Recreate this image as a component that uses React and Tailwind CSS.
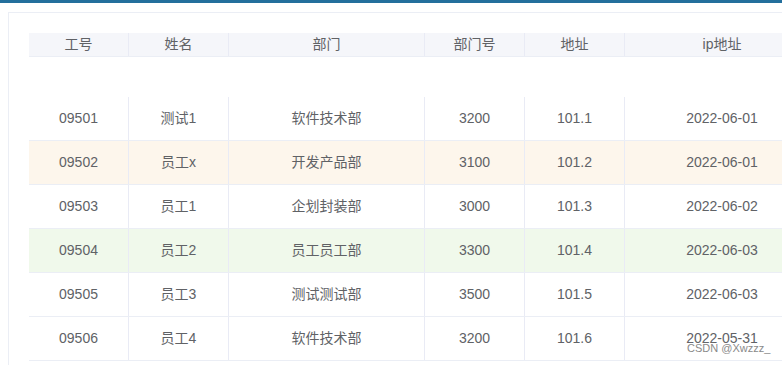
import React from 'react';

const rows = [
  { id: '09501', name: '测试1', dept: '软件技术部', no: '3200', addr: '101.1', ip: '2022-06-01', bg: 'bg-white' },
  { id: '09502', name: '员工x', dept: '开发产品部', no: '3100', addr: '101.2', ip: '2022-06-01', bg: 'bg-[#fdf6ec]' },
  { id: '09503', name: '员工1', dept: '企划封装部', no: '3000', addr: '101.3', ip: '2022-06-02', bg: 'bg-white' },
  { id: '09504', name: '员工2', dept: '员工员工部', no: '3300', addr: '101.4', ip: '2022-06-03', bg: 'bg-[#f0f9eb]' },
  { id: '09505', name: '员工3', dept: '测试测试部', no: '3500', addr: '101.5', ip: '2022-06-03', bg: 'bg-white' },
  { id: '09506', name: '员工4', dept: '软件技术部', no: '3200', addr: '101.6', ip: '2022-05-31', bg: 'bg-white' },
];

const widths = ['w-[100px]', 'w-[100px]', 'w-[196px]', 'w-[100px]', 'w-[100px]', 'w-[194px]'];
const heads = ['工号', '姓名', '部门', '部门号', '地址', 'ip地址'];

function Cell({ i, children, last }) {
  return (
    <div
      className={`${widths[i]} shrink-0 flex items-center justify-center ${last ? '' : 'border-r border-[#e9ebf5]'}`}
    >
      {children}
    </div>
  );
}

export default function App() {
  return (
    <div className="relative w-[782px] h-[365px] overflow-hidden bg-white font-['Liberation_Sans','Noto_Sans_CJK_SC',sans-serif] text-[14px] text-[#606266]">
      <div className="h-[3px] bg-[#236f9c]" />
      <div className="ml-[8px] mt-[9px] w-[800px] h-[400px] border-l border-t border-[#ebeef5] pl-[20px] pt-[20px]">
        <div className="flex h-[24px] bg-[#f5f6fa] border-b border-[#ebeef5]">
          {heads.map((h, i) => (
            <Cell key={h} i={i} last={i === 5}>{h}</Cell>
          ))}
        </div>
        <div className="h-[40px]" />
        {rows.map((r) => (
          <div key={r.id} className={`flex h-[44px] border-b border-[#ebeef5] ${r.bg}`}>
            <Cell i={0}>{r.id}</Cell>
            <Cell i={1}>{r.name}</Cell>
            <Cell i={2}>{r.dept}</Cell>
            <Cell i={3}>{r.no}</Cell>
            <Cell i={4}>{r.addr}</Cell>
            <Cell i={5} last>{r.ip}</Cell>
          </div>
        ))}
      </div>
      <span className="absolute left-[687px] top-[342px] text-[11px] leading-[13px] text-[#8a8a8a] [text-shadow:0_0_2px_#fff]">
        CSDN @Xwzzz_
      </span>
    </div>
  );
}
